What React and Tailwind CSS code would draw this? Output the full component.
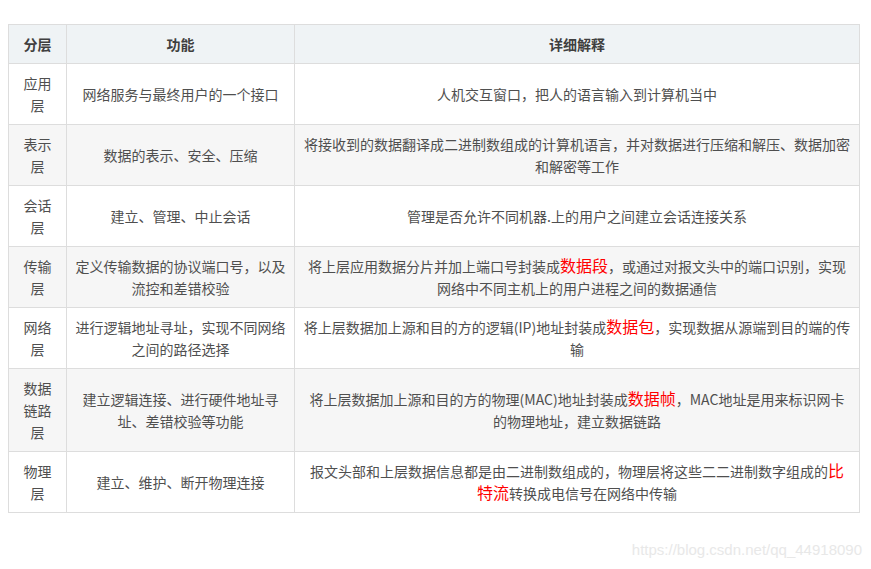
import React from "react";

const R = ({ children }) => (
  <span className="text-[#ff0000] text-[16px] leading-[16px]">{children}</span>
);

const rows = [
  ["应用层", "网络服务与最终用户的一个接口", "人机交互窗口，把人的语言输入到计算机当中"],
  ["表示层", "数据的表示、安全、压缩", "将接收到的数据翻译成二进制数组成的计算机语言，并对数据进行压缩和解压、数据加密和解密等工作"],
  ["会话层", "建立、管理、中止会话", "管理是否允许不同机器.上的用户之间建立会话连接关系"],
  ["传输层", "定义传输数据的协议端口号，以及流控和差错校验", <>将上层应用数据分片并加上端口号封装成<R>数据段</R>，或通过对报文头中的端口识别，实现网络中不同主机上的用户进程之间的数据通信</>],
  ["网络层", "进行逻辑地址寻址，实现不同网络之间的路径选择", <>将上层数据加上源和目的方的逻辑(IP)地址封装成<R>数据包</R>，实现数据从源端到目的端的传输</>],
  ["数据链路层", "建立逻辑连接、进行硬件地址寻址、差错校验等功能", <>将上层数据加上源和目的方的物理(MAC)地址封装成<R>数据帧</R>，MAC地址是用来标识网卡的物理地址，建立数据链路</>],
  ["物理层", "建立、维护、断开物理连接", <>报文头部和上层数据信息都是由二进制数组成的，物理层将这些二二进制数字组成的<R>比特流</R>转换成电信号在网络中传输</>],
];

export default function App() {
  return (
    <div
      className="bg-white w-[871px] h-[569px] pt-[24px] pl-[8px] text-[14px] leading-[22px] text-[#4f4f4f]"
      style={{ fontFamily: '"Noto Sans CJK SC", "Noto Sans", sans-serif' }}
    >
      <table className="table-fixed border-collapse w-[852px]">
        <colgroup>
          <col className="w-[58px]" />
          <col className="w-[228px]" />
          <col />
        </colgroup>
        <thead>
          <tr className="bg-[#eff3f5]">
            {["分层", "功能", "详细解释"].map((h) => (
              <th
                key={h}
                className="border border-[#dddddd] px-2 py-2 font-bold text-[#3f3f3f] text-center"
              >
                {h}
              </th>
            ))}
          </tr>
        </thead>
        <tbody>
          {rows.map((r, i) => (
            <tr key={i} className={i % 2 === 1 ? "bg-[#f6f6f6]" : "bg-white"}>
              {r.map((c, j) => (
                <td
                  key={j}
                  className="border border-[#dddddd] px-2 py-2 text-center align-middle"
                >
                  {c}
                </td>
              ))}
            </tr>
          ))}
        </tbody>
      </table>
      <div
        className="mt-[27px] pr-[9px] text-right text-[15px] leading-[20px] text-[#e8e8e8]"
        style={{ fontFamily: '"Liberation Sans", Arial, sans-serif' }}
      >
        https://blog.csdn.net/qq_44918090
      </div>
    </div>
  );
}
